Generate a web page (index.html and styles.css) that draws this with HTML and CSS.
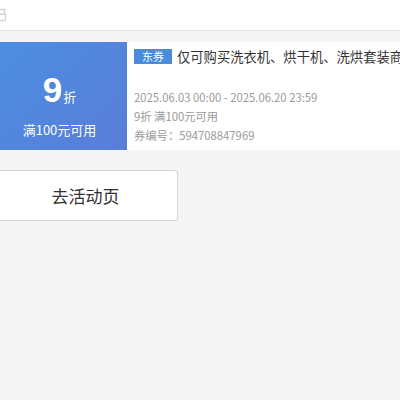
FILE: index.html
```html
<!DOCTYPE html>
<html lang="zh-CN">
<head>
<meta charset="utf-8">
<link rel="stylesheet" href="styles.css">
</head>
<body>
<div class="header"><svg class="back" width="8" height="16" viewBox="0 0 8 16"><path d="M0 2.5h5.5M4.5 2.5v4M0 7h6M5.5 7v6.5M0 13.5h5.5" fill="none" stroke="#d2d2d2" stroke-width="1.3"/></svg></div>
<div class="coupon">
  <div class="coupon-left">
    <div class="value"><span class="num">9</span><span class="unit">折</span></div>
    <div class="cond">满100元可用</div>
  </div>
  <div class="coupon-right">
    <div class="title"><span class="tag">东券</span><span class="name">仅可购买洗衣机、烘干机、洗烘套装商品</span></div>
    <div class="info">
      <div class="line">2025.06.03 00:00 - 2025.06.20 23:59</div>
      <div class="line">9折 满100元可用</div>
      <div class="line">券编号：594708847969</div>
    </div>
  </div>
</div>
<div class="btn">去活动页</div>
</body>
</html>
```
FILE: styles.css
```css
html, body {
  margin: 0;
  padding: 0;
  background: #f5f5f5;
  font-family: "Noto Sans CJK SC", "Noto Sans", sans-serif;
  overflow: hidden;
  width: 400px;
  height: 400px;
}
.header {
  height: 30px;
  background: #fff;
  border-bottom: 1px solid #e6e6e6;
  display: flex;
  align-items: center;
  overflow: hidden;
}
.back {
  display: block;
  margin-top: -1px;
}
.coupon {
  margin-top: 11px;
  margin-left: -8px;
  display: flex;
  height: 108px;
  width: 460px;
}
.coupon-left {
  width: 135px;
  flex: none;
  background: linear-gradient(135deg, #4b8fe0 0%, #5a7dd9 100%);
  color: #fff;
  display: flex;
  flex-direction: column;
  align-items: center;
}
.value {
  margin-top: 30px;
  height: 36px;
  display: flex;
  align-items: baseline;
}
.num {
  font-family: "Liberation Sans", Arial, sans-serif;
  font-size: 35px;
  font-weight: bold;
  line-height: 36px;
}
.unit {
  font-size: 13px;
  margin-left: 1px;
}
.cond {
  margin-top: 13px;
  font-size: 13px;
  line-height: 18px;
}
.coupon-right {
  flex: 1;
  background: #fff;
  padding-left: 7px;
  display: flex;
  flex-direction: column;
  overflow: hidden;
}
.title {
  margin-top: 6px;
  display: flex;
  align-items: center;
  white-space: nowrap;
}
.tag {
  background: #4a8cdb;
  color: #fff;
  font-size: 11px;
  width: 38px;
  height: 15px;
  line-height: 15px;
  text-align: center;
  flex: none;
}
.name {
  margin-left: 5px;
  font-size: 13.3px;
  color: #333;
  line-height: 17px;
}
.info {
  margin-top: 23px;
}
.line {
  font-size: 11.3px;
  color: #9a9a9a;
  height: 19px;
  line-height: 19px;
}
.btn {
  margin-top: 20px;
  margin-left: -7px;
  width: 183px;
  height: 49px;
  background: #fff;
  border: 1px solid #d4d4d4;
  border-radius: 3px;
  display: flex;
  align-items: center;
  justify-content: center;
  font-size: 17px;
  color: #333;
}
```
